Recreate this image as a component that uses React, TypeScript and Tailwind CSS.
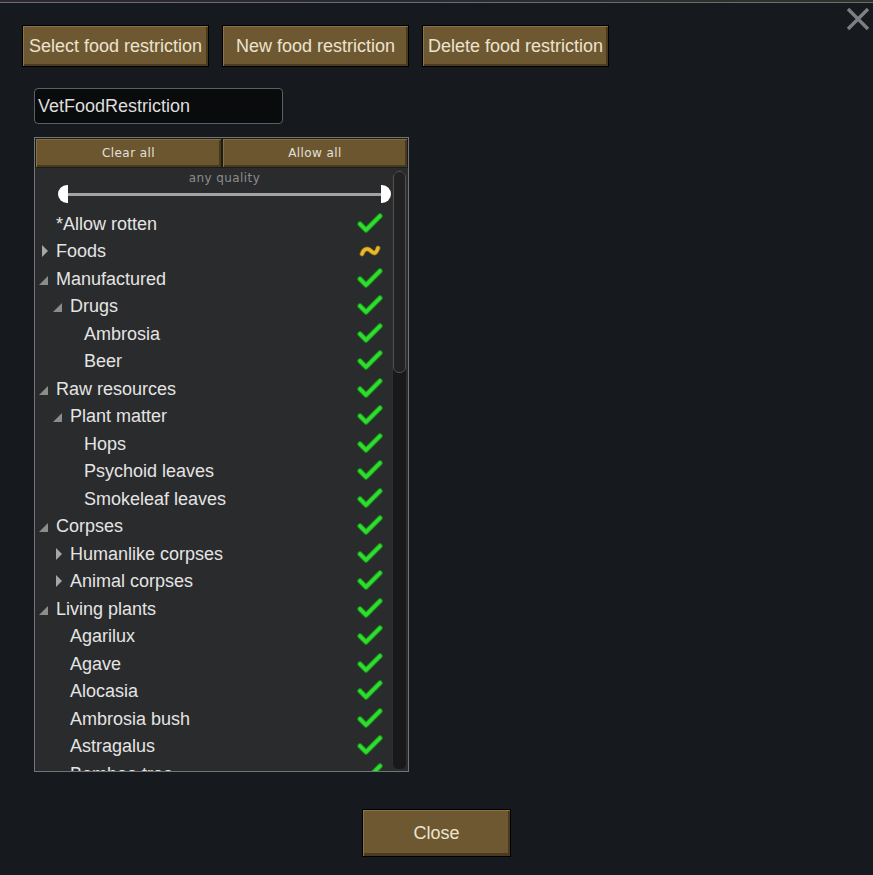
import React from "react";

type Mark = "check" | "partial";
type Arrow = "open" | "closed" | null;

interface Row {
    label: string;
    level: 0 | 1 | 2;
    arrow: Arrow;
    mark: Mark;
}

const rows: Row[] = [
    { label: "*Allow rotten", level: 0, arrow: null, mark: "check" },
    { label: "Foods", level: 0, arrow: "closed", mark: "partial" },
    { label: "Manufactured", level: 0, arrow: "open", mark: "check" },
    { label: "Drugs", level: 1, arrow: "open", mark: "check" },
    { label: "Ambrosia", level: 2, arrow: null, mark: "check" },
    { label: "Beer", level: 2, arrow: null, mark: "check" },
    { label: "Raw resources", level: 0, arrow: "open", mark: "check" },
    { label: "Plant matter", level: 1, arrow: "open", mark: "check" },
    { label: "Hops", level: 2, arrow: null, mark: "check" },
    { label: "Psychoid leaves", level: 2, arrow: null, mark: "check" },
    { label: "Smokeleaf leaves", level: 2, arrow: null, mark: "check" },
    { label: "Corpses", level: 0, arrow: "open", mark: "check" },
    { label: "Humanlike corpses", level: 1, arrow: "closed", mark: "check" },
    { label: "Animal corpses", level: 1, arrow: "closed", mark: "check" },
    { label: "Living plants", level: 0, arrow: "open", mark: "check" },
    { label: "Agarilux", level: 1, arrow: null, mark: "check" },
    { label: "Agave", level: 1, arrow: null, mark: "check" },
    { label: "Alocasia", level: 1, arrow: null, mark: "check" },
    { label: "Ambrosia bush", level: 1, arrow: null, mark: "check" },
    { label: "Astragalus", level: 1, arrow: null, mark: "check" },
    { label: "Bamboo tree", level: 1, arrow: null, mark: "check" },
];

const indent: Record<number, string> = {
    0: "pl-[3px]",
    1: "pl-[17px]",
    2: "pl-[31px]",
};

// ---- small drawings ----
function CheckMark() {
    return (
        <svg width="26" height="22" viewBox="0 0 26 22">
            <path d="M3 11 L9 17 L23 3" fill="none" stroke="#178a17" strokeWidth="5.5" strokeLinecap="round" strokeLinejoin="round" />
            <path d="M3 11 L9 17 L23 3" fill="none" stroke="#2fdc2f" strokeWidth="3.6" strokeLinecap="round" strokeLinejoin="round" />
        </svg>
    );
}

function PartialMark() {
    return (
        <svg width="26" height="22" viewBox="0 0 26 22">
            <path d="M5 14 C7 8, 11 8, 14 11 S 19 14, 21 8" fill="none" stroke="#8a6a10" strokeWidth="5" strokeLinecap="round" />
            <path d="M5 14 C7 8, 11 8, 14 11 S 19 14, 21 8" fill="none" stroke="#e9b82c" strokeWidth="3.4" strokeLinecap="round" />
        </svg>
    );
}

function TreeArrow({ kind }: { kind: Arrow }) {
    if (kind === "closed") {
        return (
            <svg width="18" height="14" viewBox="0 0 18 14" className="shrink-0">
                <polygon points="4,1 10,7 4,13" fill="#a6a6a6" />
            </svg>
        );
    }
    if (kind === "open") {
        return (
            <svg width="18" height="14" viewBox="0 0 18 14" className="shrink-0">
                <polygon points="1,13 10,13 10,4" fill="#8c8c8c" />
            </svg>
        );
    }
    return <span className="w-[18px] shrink-0" />;
}

function BrownButton({ label, className }: { label: string; className: string }) {
    return (
        <button
            className={`${className} bg-[#6e5831] border border-black shadow-[inset_1px_1px_0_#8c7446,inset_-2px_-2px_0_#4b3b1e] flex items-center justify-center text-[#ece3cf] text-[18px] whitespace-nowrap`}
        >
            {label}
        </button>
    );
}

export default function App() {
    return (
        <div className="w-[873px] h-[875px] bg-[#16191d] relative overflow-hidden font-['Liberation_Sans',Arial,sans-serif]">
            {/* strip of the map behind the window */}
            <div className="h-[3px] bg-gradient-to-r from-[#2e2631] via-[#2a2a33] to-[#2c3429] border-b border-[#6b6d70]" />

            {/* close cross */}
            <svg className="absolute top-[7px] right-[3px]" width="24" height="24" viewBox="0 0 24 24">
                <path d="M2 2 L22 22 M22 2 L2 22" stroke="#7d7f80" strokeWidth="3.4" />
            </svg>

            <div className="flex flex-col items-start pt-[22px]">
                {/* top buttons */}
                <div className="flex gap-[13px] pl-[22px]">
                    <BrownButton label="Select food restriction" className="w-[187px] h-[42px]" />
                    <BrownButton label="New food restriction" className="w-[187px] h-[42px]" />
                    <BrownButton label="Delete food restriction" className="w-[187px] h-[42px]" />
                </div>

                {/* name field */}
                <div className="ml-[34px] mt-[21px] w-[249px] h-[36px] bg-[#0a0b0c] border border-[#5c6064] rounded-[4px] flex items-center pl-[3px] text-[18px] text-[#dedede]">
                    VetFoodRestriction
                </div>

                {/* filter panel */}
                <div className="ml-[34px] mt-[13px] w-[375px] h-[635px] border border-[#727578] bg-[#2a2b2c] flex flex-col overflow-hidden">
                    <div className="flex gap-[2px] p-[1px] bg-[#1c1c1c] font-['DejaVu_Sans',sans-serif] text-[12px] tracking-[0.4px] text-[#e2e0da]">
                        <button className="w-[185px] h-[28px] bg-[#6c5630] shadow-[inset_1px_1px_0_#85703f,inset_-2px_-2px_0_#4a3a1d]">Clear all</button>
                        <button className="w-[184px] h-[28px] bg-[#6c5630] shadow-[inset_1px_1px_0_#85703f,inset_-2px_-2px_0_#4a3a1d]">Allow all</button>
                    </div>

                    <div className="flex flex-1 min-h-0">
                        <div className="flex-1 overflow-hidden">
                            {/* quality range */}
                            <div className="pl-[23px] pr-[1px] pt-[3px]">
                                <div className="text-center font-['DejaVu_Sans',sans-serif] text-[12px] leading-[14px] tracking-[0.4px] text-[#8c8c8c]">
                                    any quality
                                </div>
                                <div className="flex h-[18px]">
                                    <div className="w-[10px] h-[18px] bg-white rounded-l-full" />
                                    <div className="flex-1 h-[3px] self-center bg-[#a4a4a4]" />
                                    <div className="w-[10px] h-[18px] bg-white rounded-r-full" />
                                </div>
                            </div>

                            {/* tree */}
                            <div className="mt-[7px]">
                                {rows.map((r) => (
                                    <div key={r.label} className={`flex items-center h-[27.5px] pr-[9px] ${indent[r.level]}`}>
                                        <TreeArrow kind={r.arrow} />
                                        <span className="text-[18px] leading-[22px] text-[#e4e4e4] whitespace-nowrap">{r.label}</span>
                                        <span className="ml-auto flex items-center">
                                            {r.mark === "check" ? <CheckMark /> : <PartialMark />}
                                        </span>
                                    </div>
                                ))}
                            </div>
                        </div>

                        {/* scrollbar */}
                        <div className="w-[15px] mt-[2px] mb-[1px] mr-[1px] rounded-[6px] bg-[#191919] border border-[#2e2e2e] flex flex-col">
                            <div className="h-[202px] rounded-[6px] bg-[#222222] border border-[#505050]" />
                        </div>
                    </div>
                </div>

                {/* close */}
                <div className="mt-[37px] ml-[362px]">
                    <button className="w-[149px] h-[48px] bg-[#6e5831] border border-black shadow-[inset_1px_1px_0_#8c7446,inset_-2px_-3px_0_#4b3b1e] text-[#ece3cf] text-[18px]">
                        Close
                    </button>
                </div>
            </div>
        </div>
    );
}
